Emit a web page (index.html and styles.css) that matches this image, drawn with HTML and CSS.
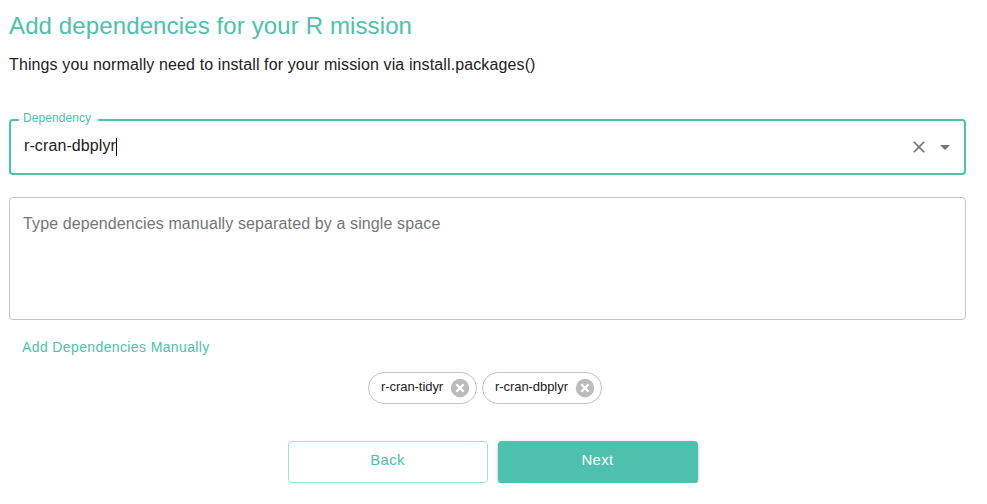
FILE: index.html
```html
<!DOCTYPE html>
<html lang="en">
<head>
<meta charset="utf-8">
<title>Add dependencies</title>
<link rel="stylesheet" href="styles.css">
</head>
<body>
<main class="page">
  <h1 class="title"><span>Add dependencies for your R mission</span></h1>
  <p class="subtitle"><span>Things you normally need to install for your mission via install.packages()</span></p>

  <fieldset class="field">
    <legend class="field-label"><span>Dependency</span></legend>
    <div class="field-row">
      <span class="field-value">r-cran-dbplyr</span><span class="caret"></span>
      <svg class="icon-clear" width="20" height="20" viewBox="0 0 24 24"><path d="M19 6.41L17.59 5 12 10.59 6.41 5 5 6.41 10.59 12 5 17.59 6.41 19 12 13.41 17.59 19 19 17.59 13.41 12z"/></svg>
      <svg class="icon-drop" width="24" height="24" viewBox="0 0 24 24"><path d="M7 10l5 5 5-5z"/></svg>
    </div>
  </fieldset>

  <div class="manual"><span>Type dependencies manually separated by a single space</span></div>
  <div class="add"><span>Add Dependencies Manually</span></div>

  <div class="chips">
    <div class="chip chip-tidyr"><span class="chip-text">r-cran-tidyr</span>
      <svg width="22" height="22" viewBox="0 0 24 24"><circle cx="12" cy="12" r="10"/><path d="M8 8l8 8M16 8l-8 8"/></svg>
    </div>
    <div class="chip chip-dbplyr"><span class="chip-text">r-cran-dbplyr</span>
      <svg width="22" height="22" viewBox="0 0 24 24"><circle cx="12" cy="12" r="10"/><path d="M8 8l8 8M16 8l-8 8"/></svg>
    </div>
  </div>

  <div class="actions">
    <div class="btn btn-back"><span>Back</span></div>
    <div class="btn btn-next"><span>Next</span></div>
  </div>
</main>
</body>
</html>
```
FILE: styles.css
```css
* { box-sizing: border-box; }
body {
  margin: 0;
  background: #fff;
  color: #212121;
  font-family: "Liberation Sans", Arial, sans-serif;
}
.page { padding: 10px 21px 0 9px; }
.title {
  margin: 0;
  height: 32px;
  line-height: 32px;
  font-size: 24px;
  font-weight: 400;
  letter-spacing: 0.12px;
  color: #4dc1ac;
}
.subtitle {
  margin: 11px 0 0;
  height: 24px;
  line-height: 24px;
  font-size: 16px;
  letter-spacing: 0.12px;
}
.field {
  margin: 35px 0 0;
  padding: 0 0 0 8px;
  height: 63px;
  min-width: 0;
  border: 2px solid #4dc1ac;
  border-radius: 4px;
}
.field-label {
  height: 16px;
  padding: 0 7px 0 4px;
  line-height: 12px;
  font-size: 12px;
  letter-spacing: 0.08px;
  color: #4dc1ac;
}
.field-row {
  display: flex;
  align-items: center;
  height: 38px;
  padding: 0 7px 0 5px;
}
.field-value {
  padding-bottom: 2px;
  font-size: 16px;
  line-height: 20px;
  letter-spacing: 0.1px;
}
.caret { width: 1px; height: 18px; background: #000; }
.icon-clear { margin-left: auto; fill: #757575; }
.icon-drop { margin-left: 4px; fill: #757575; }
.manual {
  margin-top: 22px;
  height: 123px;
  padding: 16px 13px;
  border: 1px solid #c4c4c4;
  border-radius: 4px;
  line-height: 19px;
  font-size: 16px;
  letter-spacing: 0.12px;
  color: #757575;
}
.add {
  margin-top: 15px;
  padding-left: 13px;
  line-height: 24px;
  font-size: 14px;
  letter-spacing: 0.38px;
  color: #4dc1ac;
}
.chips {
  display: flex;
  gap: 5px;
  margin: 13px 0 0 359px;
}
.chip {
  display: flex;
  align-items: center;
  justify-content: space-between;
  height: 32px;
  padding: 0 5px 0 12px;
  border: 1px solid #c4c4c4;
  border-radius: 16px;
  font-size: 13px;
  letter-spacing: -0.06px;
}
.chip-tidyr { width: 109px; }
.chip-dbplyr { width: 120px; }
.chip-text { line-height: 18px; margin-top: -2px; }
.chip svg { fill: #bcbcbc; stroke-width: 2.4; }
.chip path { stroke: #fff; }
.actions {
  display: flex;
  gap: 10px;
  margin: 37px 0 0 279px;
}
.btn {
  width: 200px;
  height: 42px;
  padding-right: 1px;
  border-radius: 4px;
  line-height: 38px;
  text-align: center;
  font-size: 15px;
  letter-spacing: 0.3px;
}
.btn-back {
  border: 1px solid #a6e0d5;
  line-height: 36px;
  color: #4dc1ac;
}
.btn-next {
  background: #4dc1ac;
  color: #fff;
  box-shadow: 0 3px 1px -2px rgba(0,0,0,.3), 0 2px 2px 0 rgba(0,0,0,.18), 0 1px 5px 0 rgba(0,0,0,.14);
}
```
